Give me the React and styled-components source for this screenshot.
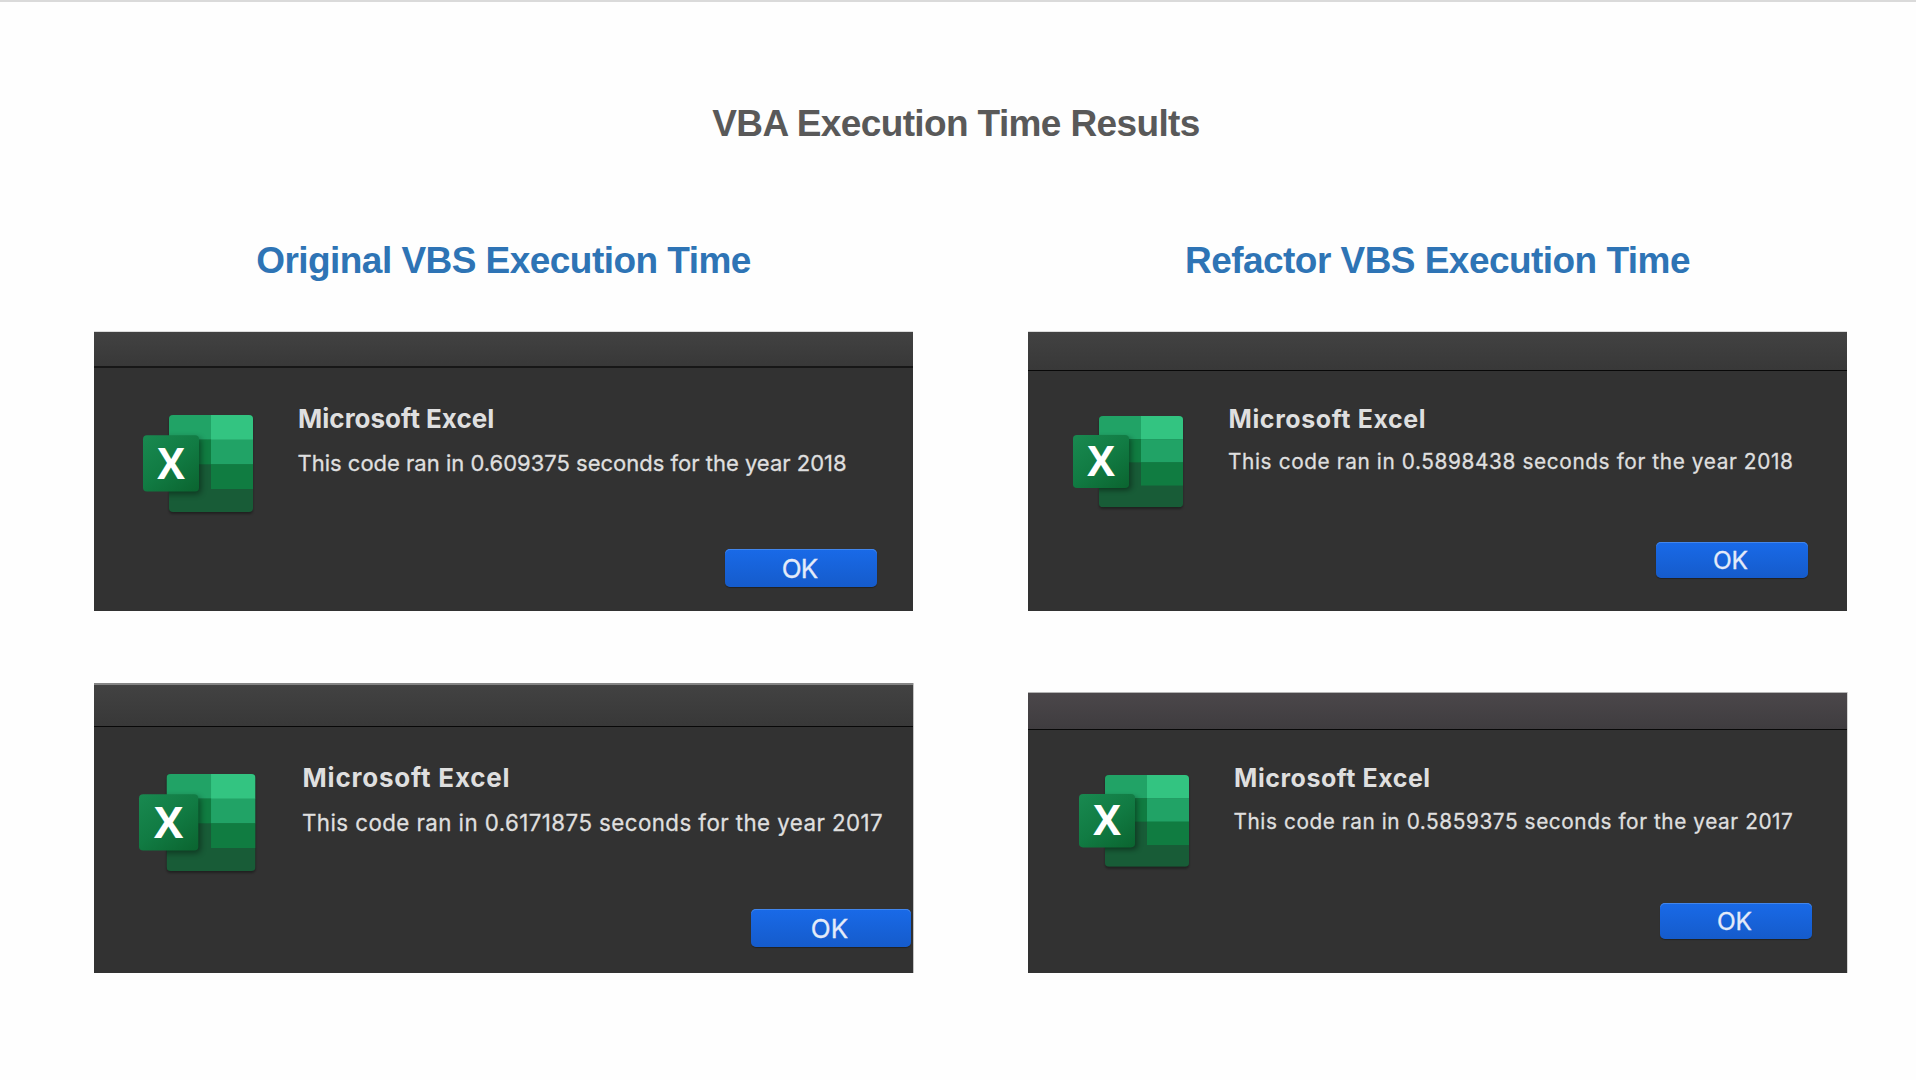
import React from "react";
import styled, { createGlobalStyle } from "styled-components";

const GlobalStyle = createGlobalStyle`
  *, *::before, *::after { box-sizing: border-box; }
  body { margin: 0; background: #fff; font-family: "Liberation Sans", Arial, sans-serif; }
  h1, h2, h3, p { margin: 0; }
`;

const Page = styled.main`
  height: 1080px;
  border-top: 2px solid #dadada;
  background: #fefefe;
  overflow: hidden;
`;

const PageTitle = styled.h1`
  padding-top: 100px;
  text-align: center;
  font-size: 37px;
  line-height: 44px;
  letter-spacing: -0.63px;
  color: #595959;
  padding-right: 4px;
`;

const Columns = styled.div`
  display: flex;
  gap: 115px;
  padding: 93px 0 0 94px;
`;

const Column = styled.section`
  display: flex;
  flex-direction: column;
  width: 819px;
`;

const ColumnTitle = styled.h2`
  height: 44px;
  margin-bottom: 49px;
  text-align: center;
  font-size: 37px;
  line-height: 44px;
  letter-spacing: -0.54px;
  color: #2e74b5;
`;

const Stack = styled.div`
  display: flex;
  flex-direction: column;
  gap: ${(p) => p.$gap}px;
`;

const Dialog = styled.article`
  height: ${(p) => p.$height}px;
  background: #323232;
  overflow: hidden;
  box-shadow: ${(p) => p.$edge};
`;

const TitleBar = styled.div`
  height: ${(p) => p.$height}px;
  background: ${(p) =>
    p.$warm
      ? "linear-gradient(#4b474a, #3f3c3f)"
      : "linear-gradient(#424242, #383838)"};
  border-top: ${(p) => p.$top};
  border-bottom: ${(p) => p.$line}px solid ${(p) => (p.$line > 1 ? "#171717" : "#080808")};
`;

const Body = styled.div`
  display: flex;
  height: ${(p) => p.$height}px;
  padding-left: ${(p) => p.$left}px;
`;

const Icon = styled.svg`
  display: block;
  flex: none;
  width: ${(p) => p.$w}px;
  height: ${(p) => p.$h}px;
  margin-top: ${(p) => p.$top}px;
  margin-right: ${(p) => p.$gap}px;
  overflow: visible;
`;

const Copy = styled.div`
  padding-top: ${(p) => p.$top}px;
  font-family: Inter, "Liberation Sans", sans-serif;
  color: #dfdfdf;
  white-space: nowrap;
`;

const AppName = styled.h3`
  padding-left: 0.6px;
  font-size: ${(p) => p.$size}px;
  font-weight: 700;
  line-height: 30px;
  letter-spacing: ${(p) => p.$spacing}px;
`;

const Message = styled.p`
  margin-top: ${(p) => p.$gap}px;
  font-size: ${(p) => p.$size}px;
  line-height: 28px;
  letter-spacing: ${(p) => p.$spacing}px;
  -webkit-text-stroke: 0.3px #dfdfdf;
`;

const Footer = styled.footer`
  display: flex;
  justify-content: flex-end;
  padding-right: ${(p) => p.$right}px;
`;

const Button = styled.button`
  width: ${(p) => p.$w}px;
  height: ${(p) => p.$h}px;
  padding: ${(p) => p.$drop}px 3px 0 0;
  border: 0;
  border-radius: 5px;
  background: linear-gradient(#196ae8, #155bcb);
  box-shadow: inset 0 1px 0 #4286ec, 0 1px 1px rgba(0, 0, 0, 0.35);
  font-family: Inter, "Liberation Sans", sans-serif;
  font-size: ${(p) => p.$size}px;
  line-height: 30px;
  letter-spacing: ${(p) => p.$spacing}px;
  color: #e4ebf9;
  -webkit-text-stroke: 0.3px #e4ebf9;
`;

function ExcelIcon({ id, box }) {
  return (
    <Icon viewBox="0 0 110 97" preserveAspectRatio="none" $w={box.w} $h={box.h} $top={box.top} $gap={box.gap}>
      <defs>
        <linearGradient id={`${id}-tile`} x1="0.1" y1="0" x2="0.9" y2="1">
          <stop offset="0" stopColor="#18884f" />
          <stop offset="0.5" stopColor="#117b43" />
          <stop offset="1" stopColor="#0b6631" />
        </linearGradient>
        <clipPath id={`${id}-sheet`}>
          <rect x="26" y="0" width="84" height="97" rx="4" />
        </clipPath>
        <filter id={`${id}-blur`} x="-30%" y="-30%" width="160%" height="160%">
          <feGaussianBlur stdDeviation="3" />
        </filter>
        <filter id={`${id}-soft`} x="-10%" y="-10%" width="120%" height="120%">
          <feGaussianBlur stdDeviation="1" />
        </filter>
      </defs>
      <rect x="26" y="2" width="84" height="97" rx="4" fill="#000" opacity="0.35" filter={`url(#${id}-soft)`} />
      <g clipPath={`url(#${id}-sheet)`}>
        <rect x="26" y="0" width="84" height="97" fill="#185c37" />
        <rect x="26" y="0" width="42.2" height="24.7" fill="#21a366" />
        <rect x="68" y="0" width="42" height="24.9" fill="#33c481" />
        <rect x="26" y="24.7" width="42.2" height="24.6" fill="#107c41" />
        <rect x="68" y="24.7" width="42" height="24.8" fill="#21a366" />
        <rect x="68" y="49.3" width="42" height="24.7" fill="#107c41" />
        <rect x="2" y="23" width="56" height="56" rx="4" fill="#000" opacity="0.42" filter={`url(#${id}-blur)`} />
      </g>
      <rect x="0" y="20.2" width="56" height="56.3" rx="4" fill={`url(#${id}-tile)`} />
      <text
        x="28"
        y="63.8"
        textAnchor="middle"
        fontFamily='"Open Sans", "Noto Sans", sans-serif'
        fontWeight="700"
        fontSize="43.5"
        textLength="27.6"
        lengthAdjust="spacingAndGlyphs"
        fill="#fff"
      >
        X
      </text>
    </Icon>
  );
}

function ExcelDialog({ d }) {
  return (
    <Dialog $height={d.height} $edge={d.edge}>
      <TitleBar $height={d.bar} $line={d.line} $top={d.barTop} $warm={d.warm} />
      <Body $height={d.body} $left={d.left}>
        <ExcelIcon id={d.id} box={d.icon} />
        <Copy $top={d.copyTop}>
          <AppName $size={d.name[0]} $spacing={d.name[1]}>Microsoft Excel</AppName>
          <Message $size={d.text[0]} $spacing={d.text[1]} $gap={d.textGap}>{d.message}</Message>
        </Copy>
      </Body>
      <Footer $right={d.right}>
        <Button type="button" $w={d.button[0]} $h={d.button[1]} $size={d.ok[0]} $spacing={d.ok[1]} $drop={d.ok[2]}>OK</Button>
      </Footer>
    </Dialog>
  );
}

const original = [
  {
    id: "original-2018", message: "This code ran in 0.609375 seconds for the year 2018",
    height: 279, bar: 36, line: 2, barTop: "0", edge: "0 -1px 0 #dcdcdc",
    body: 181, left: 49, icon: { w: 110, h: 97, top: 46.7, gap: 44.5 },
    copyTop: 36, name: [26, 0], text: [22, 0], textGap: 15,
    right: 36, button: [152, 38], ok: [26, -0.8, 2],
  },
  {
    id: "original-2017", message: "This code ran in 0.6171875 seconds for the year 2017",
    height: 290, bar: 44, line: 1, barTop: "2px solid #858585", edge: "1px 0 0 #c4c4c4",
    body: 182, left: 45, icon: { w: 116.5, h: 97, top: 47, gap: 46.5 },
    copyTop: 36, name: [26, 0.78], text: [22.3, 0.44], textGap: 16,
    right: 2, button: [160, 38], ok: [26, 0, 2],
  },
];

const refactored = [
  {
    id: "refactor-2018", message: "This code ran in 0.5898438 seconds for the year 2018",
    height: 279, bar: 39, line: 1, barTop: "0", edge: "0 -1px 0 #dcdcdc",
    body: 171, left: 45, icon: { w: 110, h: 91.2, top: 44.5, gap: 45 },
    copyTop: 33, name: [25, 0.6], text: [20.8, 0.61], textGap: 14,
    right: 39, button: [152, 35.5], ok: [24.5, 0, 1],
  },
  {
    id: "refactor-2017", message: "This code ran in 0.5859375 seconds for the year 2017",
    height: 281, bar: 38, line: 1, barTop: "1px solid #b4b4b4", edge: "1px 0 0 #d4d4d4", warm: true,
    body: 173, left: 51, icon: { w: 110, h: 91.8, top: 45.3, gap: 44.5 },
    copyTop: 33, name: [25, 0.53], text: [20.8, 0.57], textGap: 15,
    right: 35, button: [152, 36], ok: [24.5, 0, 0],
  },
];

export default function App() {
  return (
    <>
      <GlobalStyle />
      <Page>
        <PageTitle>VBA Execution Time Results</PageTitle>
        <Columns>
          <Column>
            <ColumnTitle>Original VBS Execution Time</ColumnTitle>
            <Stack $gap={72}>
              {original.map((d) => <ExcelDialog key={d.id} d={d} />)}
            </Stack>
          </Column>
          <Column>
            <ColumnTitle>Refactor VBS Execution Time</ColumnTitle>
            <Stack $gap={81}>
              {refactored.map((d) => <ExcelDialog key={d.id} d={d} />)}
            </Stack>
          </Column>
        </Columns>
      </Page>
    </>
  );
}
